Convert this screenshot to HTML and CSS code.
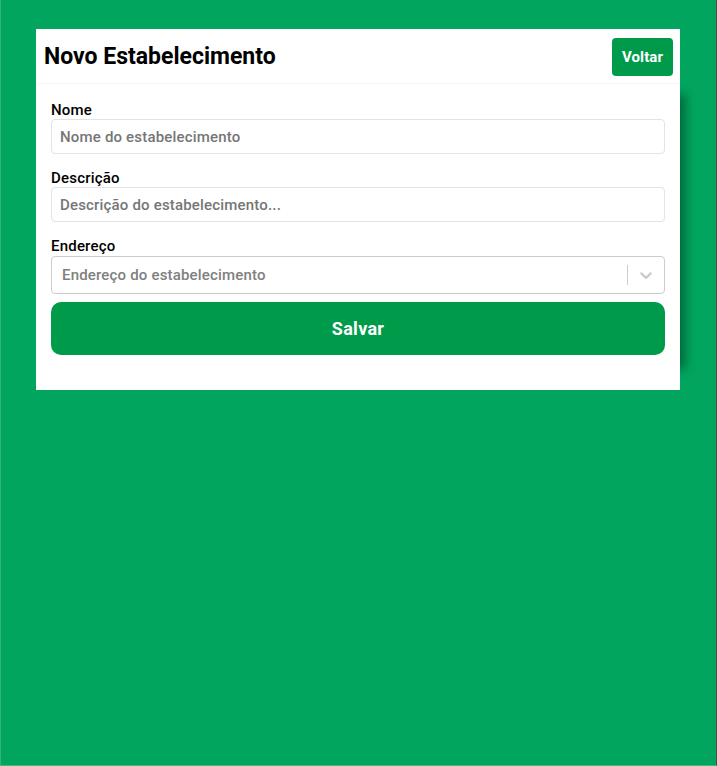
FILE: index.html
```html
<!DOCTYPE html>
<html lang="pt-BR">
<head>
<meta charset="utf-8">
<title>Novo Estabelecimento</title>
<link rel="stylesheet" href="styles.css">
</head>
<body>
<div class="page">
  <div class="card">
    <div class="card-header">
      <h1 class="title">Novo Estabelecimento</h1>
      <button class="btn-back" type="button">Voltar</button>
    </div>
    <form class="form">
      <div class="field">
        <label class="label" for="nome">Nome</label>
        <input class="input" id="nome" type="text" placeholder="Nome do estabelecimento">
      </div>
      <div class="field">
        <label class="label" for="desc">Descrição</label>
        <input class="input" id="desc" type="text" placeholder="Descrição do estabelecimento...">
      </div>
      <div class="field field-last">
        <label class="label">Endereço</label>
        <div class="select">
          <div class="select-value">Endereço do estabelecimento</div>
          <div class="select-indicators">
            <span class="select-sep"></span>
            <span class="select-arrow">
              <svg width="20" height="20" viewBox="0 0 20 20" aria-hidden="true"><path fill="currentColor" d="M4.516 7.548c0.436-0.446 1.043-0.481 1.576 0l3.908 3.747 3.908-3.747c0.533-0.481 1.141-0.446 1.574 0 0.436 0.445 0.408 1.197 0 1.615-0.406 0.418-4.695 4.502-4.695 4.502-0.217 0.223-0.502 0.335-0.787 0.335s-0.57-0.112-0.789-0.335c0 0-4.287-4.084-4.695-4.502s-0.436-1.170 0-1.615z"/></svg>
            </span>
          </div>
        </div>
      </div>
      <button class="btn-save" type="button">Salvar</button>
    </form>
  </div>
</div>
</body>
</html>
```
FILE: styles.css
```css
* { box-sizing: border-box; }
html, body { margin: 0; padding: 0; height: 100%; }
body {
  background: #01a55e;
  font-family: Roboto, "Liberation Sans", Arial, sans-serif;
}
.page {
  min-height: 100vh;
  padding: 29px 36px 0 35px;
  border-left: 1px solid #2fb574;
  border-right: 1px solid #4d4d4d;
  border-bottom: 1px solid #3cbb80;
}
.card {
  position: relative;
  background: #fff;
  padding-bottom: 35px;
}
/* soft shadow cast to the right of the form area, lying behind the card */
.card::before {
  content: "";
  position: absolute;
  top: 60px;
  bottom: 16px;
  left: 0;
  right: 0;
  box-shadow: 10px 0 10px -5px rgba(0, 0, 0, 0.38);
  z-index: -1;
}
.card-header {
  display: flex;
  align-items: center;
  justify-content: space-between;
  padding: 9px 7px 7px 8px;
  border-bottom: 1px solid #f7f7f7;
}
.title {
  margin: 0;
  font-size: 23px;
  font-weight: 700;
  color: #000;
  line-height: 26px;
}
.btn-back {
  height: 38px;
  width: 61px;
  border: none;
  border-radius: 4px;
  background: #009a4b;
  color: #fff;
  font-family: inherit;
  font-size: 15px;
  font-weight: 700;
  letter-spacing: 0.1px;
  padding: 0;
}
.form {
  padding: 18px 15px 0;
}
.field {
  display: flex;
  flex-direction: column;
  margin-bottom: 16px;
}
.field-last { margin-bottom: 8px; }
.label {
  font-size: 15px;
  font-weight: 500;
  line-height: 17px;
  letter-spacing: 0.2px;
  color: #000;
}
.input {
  height: 35px;
  border: 1px solid #e3e3e3;
  border-radius: 4px;
  padding: 0 8px;
  font-family: inherit;
  font-size: 15px;
  font-weight: 500;
  letter-spacing: 0.18px;
  color: #333;
  outline: none;
}
.input::placeholder { color: #767676; opacity: 1; }
.select {
  display: flex;
  align-items: center;
  height: 38px;
  margin-top: 1px;
  border: 1px solid #cccccc;
  border-radius: 4px;
}
.select-value {
  flex: 1;
  padding: 0 8px 0 10px;
  font-size: 15px;
  font-weight: 500;
  letter-spacing: 0.18px;
  color: #808080;
}
.select-indicators {
  display: flex;
  align-items: center;
  align-self: stretch;
}
.select-sep {
  width: 1px;
  height: 20px;
  background: #cccccc;
}
.select-arrow {
  display: flex;
  padding: 8px;
  color: #cccccc;
}
.btn-save {
  display: block;
  width: 100%;
  height: 53px;
  border: none;
  border-radius: 10px;
  background: #009a4b;
  color: #fff;
  font-family: inherit;
  font-size: 18px;
  font-weight: 700;
  letter-spacing: 0.3px;
}
```
